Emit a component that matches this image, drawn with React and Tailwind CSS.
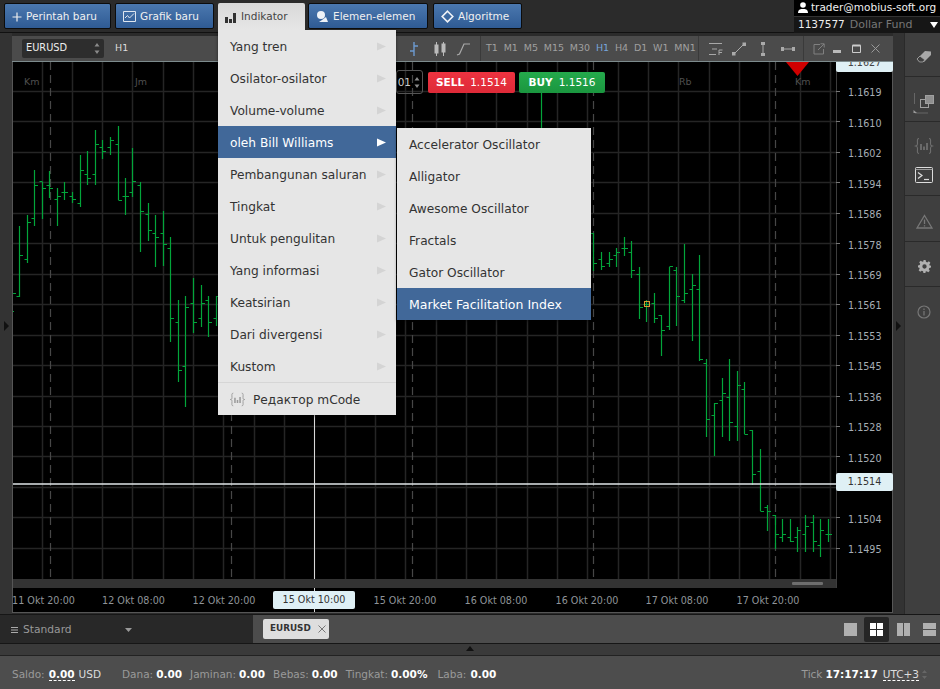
import React from 'react';

// crop-space readings of the bars: [x, high, low, open, close]
const leftBars = [
  [59, 378, 590, 590, 466], [81, 345, 490, 478, 367], [103, 210, 377, 356, 256], [127, 245, 357, 245, 265],
  [149, 212, 293, 256, 265], [172, 265, 377, 299, 288], [194, 245, 300, 277, 277], [217, 277, 310, 288, 299],
  [240, 165, 322, 310, 210], [263, 153, 255, 222, 234], [285, 90, 255, 222, 132], [308, 120, 176, 143, 155],
  [331, 110, 164, 143, 120], [354, 78, 300, 132, 300], [376, 235, 345, 288, 288], [398, 143, 290, 277, 245],
  [421, 245, 456, 256, 333], [444, 310, 422, 344, 390], [466, 345, 500, 400, 412], [489, 333, 498, 400, 432],
  [512, 412, 725, 444, 656], [535, 600, 845, 667, 812], [557, 588, 921, 800, 622], [580, 534, 700, 611, 667],
  [603, 556, 680, 656, 611], [625, 588, 712, 600, 667], [648, 588, 678, 656, 590],
].map(([x, h, l, o, c]) => [x / 3, 100 + h / 3, 100 + l / 3, 100 + o / 3, 100 + c / 3]);

const midBars = [
  [11, 400, 513, 400, 490], [34, 456, 510, 478, 500], [57, 456, 500, 490, 478], [79, 445, 500, 466, 456],
  [102, 412, 467, 445, 445], [125, 423, 535, 456, 512], [148, 500, 657, 523, 622], [170, 600, 667, 612, 612],
  [193, 580, 668, 611, 656], [215, 645, 768, 645, 690], [238, 500, 690, 680, 500], [260, 500, 678, 512, 590],
  [283, 432, 610, 600, 580], [306, 523, 722, 568, 557], [328, 466, 782, 568, 778],
].map(([x, h, l, o, c]) => [590 + x / 3, 100 + h / 3, 100 + l / 3, 100 + o / 3, 100 + c / 3]);

const rightBars = [
  [20, 28, 262, 40, 207], [44, 160, 318, 195, 160], [67, 85, 262, 150, 130], [89, 28, 272, 142, 218],
  [112, 62, 272, 230, 107], [134, 97, 253, 118, 253], [157, 240, 405, 240, 373], [180, 297, 484, 363, 484],
  [202, 465, 542, 473, 484], [225, 495, 597, 495, 552], [248, 507, 575, 563, 552], [270, 507, 575, 563, 575],
  [293, 530, 607, 563, 541], [316, 495, 607, 552, 530], [339, 495, 607, 518, 575], [361, 507, 620, 586, 541],
  [384, 507, 575, 552, 552],
].map(([x, h, l, o, c]) => [700 + x / 3, 350 + h / 3, 350 + l / 3, 350 + o / 3, 350 + c / 3]);

const bars = [...leftBars, ...midBars, ...rightBars, [541, 93, 130, 130, 130]];

const prices = ['1.1619', '1.1610', '1.1602', '1.1594', '1.1586', '1.1578', '1.1569', '1.1561', '1.1553', '1.1545', '1.1536', '1.1528', '1.1520', '', '1.1504', '1.1495'];
const times = [[43.5, '11 Okt 20:00'], [133.5, '12 Okt 08:00'], [224, '12 Okt 20:00'], [405, '15 Okt 20:00'], [496, '16 Okt 08:00'], [587, '16 Okt 20:00'], [677, '17 Okt 08:00'], [768, '17 Okt 20:00']];
const frames = ['T1', 'M1', 'M5', 'M15', 'M30', 'H1', 'H4', 'D1', 'W1', 'MN1'];
const menuItems = ['Yang tren', 'Osilator-osilator', 'Volume-volume', 'oleh Bill Williams', 'Pembangunan saluran', 'Tingkat', 'Untuk pengulitan', 'Yang informasi', 'Keatsirian', 'Dari divergensi', 'Kustom'];
const subItems = ['Accelerator Oscillator', 'Alligator', 'Awesome Oscillator', 'Fractals', 'Gator Oscillator', 'Market Facilitation Index'];

const px = (v) => Math.floor(v) + 0.5;

const Chart = () => (
  <svg viewBox="12 62 881 551" className="block h-[551px] w-[881px]">
    {Array.from({ length: 27 }, (_, i) => (
      <path key={i} d={`M${px(42 + i * 30.33)} 62V579`} stroke="#252525" strokeWidth="1.5" />
    ))}
    {prices.map((p, i) => (
      <path key={i} d={`M12 ${px(91.5 + i * 30.45)}H836`} stroke="#252525" strokeWidth="1.5" />
    ))}
    {[50, 231, 412, 593, 775].map((x) => (
      <path key={x} d={`M${x + 0.5} 62V579`} stroke="#474747" strokeDasharray="8 5" strokeWidth="1.2" />
    ))}
    <g stroke="#02a53a" fill="none" strokeWidth="1.2">
      {bars.map(([x, h, l, o, c], i) => (
        <path key={i} d={`M${px(x)} ${Math.round(h)}V${Math.round(l)}M${px(x) - 3} ${px(o)}H${px(x)}M${px(x)} ${px(c)}H${px(x) + 3.5}`} />
      ))}
      <path d="M13 293.5H16M13 311.5H14" />
    </g>
    <rect x="644.5" y="301.5" width="5" height="5" fill="none" stroke="#dc9a32" />
    <path d="M314.5 62V613" stroke="#d8d8d8" />
    <path d="M12 484H836" stroke="#e0e6e8" strokeWidth="1.6" />
    <rect x="12" y="579" width="824" height="9" fill="#333333" />
    <rect x="792" y="582" width="31" height="3" rx="1" fill="#6e6e6e" />
    <path d="M836.5 62V588" stroke="#3d3d3d" />
    <path d="M892.5 62V613M12 612.5H893M12.5 62V613" stroke="#565656" />
    {prices.map((p, i) => (
      <path key={i} d={`M836 ${px(91.5 + i * 30.45)}H840`} stroke="#777777" />
    ))}
    <path d="M786 62H809L797.5 76Z" fill="#d00000" />
    <g fontFamily="'DejaVu Sans', sans-serif" fontSize="9.5" fill="#4f4f4f">
      <text x="24" y="85">Km</text>
      <text x="135" y="85">Jm</text>
      <text x="679" y="85">Rb</text>
      <text x="795" y="85">Km</text>
    </g>
    <g fontFamily="'DejaVu Sans', sans-serif" fontSize="9.6" fill="#a6adb5">
      {prices.map((p, i) => (
        p && <text key={p} x="848" y={96.3 + i * 30.45}>{p}</text>
      ))}
      {times.map(([x, t]) => (
        <text key={t} x={x} y="604" textAnchor="middle" fill="#8f9499">{t}</text>
      ))}
    </g>
  </svg>
);

const TopButton = ({ icon, children, w }) => (
  <button className={`flex h-[26px] items-center gap-[4px] rounded-[2px] border border-[#0c0c0c] bg-gradient-to-b from-[#4b78af] to-[#2f5b94] pl-[7px] pt-px text-[10.5px] text-[#f0f0f0] ${w}`}>
    {icon}
    {children}
  </button>
);

const Divider = () => <div className="h-[25px] w-px bg-[#3a3a3a]" />;

const SideSlot = ({ h, children }) => (
  <div className={`flex flex-col items-center justify-center border-b border-[#2a2a2a] pl-[3px] ${h}`}>{children}</div>
);

const Braces = ({ color, size = 20 }) => (
  <svg width={size} height={size} viewBox="0 0 20 20" fill="none" stroke={color} strokeWidth="1.1">
    <path d="M5 2.5C2.8 2.5 3.5 5 3.5 7.5S3 9.5 1.5 10C3 10.5 3.5 10 3.5 12.5S2.8 17.5 5 17.5M15 2.5C17.2 2.5 16.5 5 16.5 7.5S17 9.5 18.5 10C17 10.5 16.5 10 16.5 12.5S17.2 17.5 15 17.5" />
    <path d="M7 8V14M10 10.5V14M13 7V14" strokeWidth="1.8" />
  </svg>
);

const Tri = ({ color }) => (
  <svg width="9" height="9" viewBox="0 0 9 9"><path d="M0 0.5L9 4.5L0 8.5Z" fill={color} /></svg>
);

const Updown = () => (
  <svg width="6" height="13" viewBox="0 0 6 13" fill="#8a8a8a"><path d="M3 1L5.5 4.5H0.5ZM3 12L0.5 8.5H5.5Z" /></svg>
);

const Menu = () => (
  <div className="absolute left-[218px] top-[30px] z-20 w-[178px] bg-[#e6e6e6] text-[12.2px] text-[#333] shadow-[0_1px_3px_rgba(0,0,0,0.5)]">
    {menuItems.map((m, i) => (
      <div key={m} className={`flex h-[32px] items-center justify-between pl-[12px] pr-[10px] ${i === 3 ? 'bg-[#416899] text-white' : ''}`}>
        <span className="pt-[2px]">{m}</span>
        <Tri color={i === 3 ? '#ffffff' : '#d4d4d4'} />
      </div>
    ))}
    <div className="flex h-[33px] items-center gap-[7px] border-t border-[#d6d6d6] pl-[11px]">
      <Braces color="#9a9a9a" size={17} />
      <span className="pt-[2px]">Редактор mCode</span>
    </div>
  </div>
);

const SubMenu = () => (
  <div className="absolute left-[397px] top-[128px] z-20 w-[194px] bg-[#e6e6e6] text-[12.2px] text-[#333] shadow-[0_1px_3px_rgba(0,0,0,0.5)]">
    {subItems.map((m, i) => (
      <div key={m} className={`flex h-[32px] items-center pl-[12px] pt-[2px] ${i === 5 ? 'bg-[#416899] text-[12.5px] text-white' : ''}`}>{m}</div>
    ))}
  </div>
);

const LayoutIcons = () => (
  <div className="ml-auto flex items-center gap-[13.5px] pr-[4px]">
    <div className="h-[13px] w-[13px] bg-[#b0b0b0]" />
    <div className="-mx-[6px] flex h-[25px] w-[25px] items-center justify-center rounded-[2px] bg-[#262626]">
      <div className="grid h-[13px] w-[13px] grid-cols-2 gap-px">
        <div className="bg-white" /><div className="bg-white" /><div className="bg-white" /><div className="bg-white" />
      </div>
    </div>
    <div className="grid h-[13px] w-[13px] grid-cols-2 gap-px">
      <div className="bg-[#b0b0b0]" /><div className="bg-[#b0b0b0]" />
    </div>
    <div className="grid h-[13px] w-[13px] grid-rows-2 gap-px">
      <div className="bg-[#b0b0b0]" /><div className="bg-[#b0b0b0]" />
    </div>
  </div>
);

export default function App() {
  return (
    <div className="relative flex h-[689px] w-[940px] flex-col overflow-hidden bg-[#2b2b2b] font-['DejaVu_Sans',sans-serif]">
      {/* top bar */}
      <div className="flex h-[33px] shrink-0 border-b border-[#111] bg-[#2b2b2b]">
        <div className="flex items-start gap-[4px] pl-[4px] pt-[3px]">
          <TopButton w="w-[107px]" icon={<svg width="10" height="10" viewBox="0 0 10 10" stroke="#eee" strokeWidth="1.2"><path d="M5 0.5V9.5M0.5 5H9.5" /></svg>}>Perintah baru</TopButton>
          <TopButton w="w-[99px]" icon={<svg width="13" height="13" viewBox="0 0 13 13" fill="none" stroke="#dfe6ef"><path d="M0.5 1.5H12.5V11.5H0.5Z" /><path d="M2 8L4.5 5.5L6.5 8L11 3.5" /></svg>}>Grafik baru</TopButton>
          <button className="relative z-30 flex h-[27px] w-[87px] items-center gap-[5px] rounded-t-[2px] bg-gradient-to-b from-[#d9d9d9] to-[#e6e6e6] pl-[7px] pt-px text-[10.5px] text-[#444]">
            <svg width="11" height="11" viewBox="0 0 11 11" fill="#333"><path d="M0 5H3V11H0ZM4 7H7V11H4ZM8 1H11V11H8Z" /></svg>
            Indikator
          </button>
          <TopButton w="w-[120px] -ml-[1px]" icon={<svg width="13" height="13" viewBox="0 0 13 13" fill="#eef2f7"><circle cx="5" cy="5" r="4" /><path d="M3 12L12 12L10 7L6 10Z" /></svg>}>Elemen-elemen</TopButton>
          <TopButton w="w-[89px] ml-[1px]" icon={<svg width="13" height="13" viewBox="0 0 13 13" fill="none" stroke="#f0f3f7" strokeWidth="1.6"><path d="M6.5 1.2L11.8 6.5L6.5 11.8L1.2 6.5Z" /></svg>}>Algoritme</TopButton>
        </div>
        <div className="ml-auto flex h-[32px] w-[146px] flex-col bg-black text-[10.5px]">
          <div className="flex h-[17px] items-center gap-[3px] whitespace-nowrap pl-[4px] text-[#f0f0f0]">
            <svg width="10" height="11" viewBox="0 0 10 11" fill="#fff"><circle cx="5" cy="3" r="2.8" /><path d="M0 11C0 7 3 7 5 7S10 7 10 11Z" /></svg>
            trader@mobius-soft.org
          </div>
          <div className="flex flex-1 items-center border-t border-[#333] bg-[#161616] pl-[4px]">
            <span className="text-[#eee]">1137577</span>
            <span className="ml-[5px] text-[11px] text-[#777]">Dollar Fund</span>
            <svg className="ml-auto mr-[2px]" width="8" height="6" viewBox="0 0 8 6" fill="#fff"><path d="M0 0H8L4 6Z" /></svg>
          </div>
        </div>
      </div>

      {/* main row */}
      <div className="flex h-[581px] shrink-0">
        <div className="flex w-[12px] items-center justify-center bg-[#333] pt-[5px]">
          <svg width="5" height="10" viewBox="0 0 5 10" fill="#111"><path d="M0 0L5 5L0 10Z" /></svg>
        </div>
        <div className="flex w-[881px] flex-col pt-[3px]">
          <div className="flex h-[26px] items-center border-b border-[#7d8b8d] bg-[#4b4b4b]">
            <div className="ml-[10px] flex h-[19px] w-[82px] items-center justify-between rounded-[2px] bg-[#2d2d2d] px-[4px] text-[9.8px] text-[#eee]">
              EURUSD
              <Updown />
            </div>
            <span className="ml-[11px] w-[13px] text-[9.5px] text-[#ddd]">H1</span>
            <div className="ml-[286px] flex w-[66px] items-center">
              <svg className="ml-[-6px]" width="12" height="18" viewBox="0 0 12 18" fill="none" stroke="#6d9bd0" strokeWidth="1.4"><path d="M6 2V16M2 11H6M6 6H10" /></svg>
              <svg className="ml-[13px]" width="14" height="16" viewBox="0 0 14 16" fill="#bbb" stroke="#bbb"><path d="M3.5 1V15M10.5 1V15" /><rect x="2" y="4" width="3" height="8" /><rect x="9" y="3" width="3" height="8" /></svg>
              <svg className="ml-[9px]" width="15" height="15" viewBox="0 0 15 15" fill="none" stroke="#aaa" strokeWidth="1.2"><path d="M1 14L3.5 13L8 3H14" /></svg>
            </div>
            <Divider />
            <div className="flex w-[217px] items-center gap-[5.8px] pl-[5px] text-[9.5px] text-[#a0a0a0]">
              {frames.map((f) => (
                <span key={f} className={f === 'H1' ? 'text-[#78a6dc]' : ''}>{f}</span>
              ))}
            </div>
            <Divider />
            <div className="flex w-[104px] items-center pl-[8px]">
              <svg width="16" height="14" viewBox="0 0 16 14" fill="none" stroke="#a8a8a8"><path d="M2 1.5H15M5 7H10M2 12.5H9" /><path d="M12 13V8H15.5M12 10.5H15" /></svg>
              <svg className="ml-[9px]" width="14" height="14" viewBox="0 0 14 14" fill="#aaa" stroke="#aaa"><path d="M2 12L12 2" /><rect x="0.5" y="10.5" width="2.5" height="2.5" /><rect x="11" y="1" width="2.5" height="2.5" /></svg>
              <svg className="ml-[14px]" width="6" height="14" viewBox="0 0 6 14" fill="#aaa" stroke="#aaa"><path d="M3 2V12" /><rect x="1.5" y="0.5" width="3" height="2" /><rect x="1.5" y="11.5" width="3" height="2" /></svg>
              <svg className="ml-[15px]" width="14" height="6" viewBox="0 0 14 6" fill="#aaa" stroke="#aaa"><path d="M2 3H12" /><rect x="0.5" y="1.5" width="2" height="3" /><rect x="11.5" y="1.5" width="2" height="3" /></svg>
            </div>
            <Divider />
            <div className="flex flex-1 items-center pl-[9px]">
              <svg width="12" height="12" viewBox="0 0 12 12" fill="none" stroke="#808080"><path d="M7 1.5H1V11H10.5V6M5 7L11 1M7.5 0.8H11.2V4.5" /></svg>
              <svg className="ml-[8px] mt-[5px]" width="8" height="3" viewBox="0 0 8 3" fill="#bbb"><path d="M0 0H8V3H0Z" /></svg>
              <svg className="ml-[11px]" width="9" height="9" viewBox="0 0 9 9" fill="none" stroke="#ccc"><path d="M0.5 1.5H8.5V8.5H0.5Z" /><path d="M0.5 1.5H8.5" strokeWidth="2" /></svg>
              <svg className="ml-[10px]" width="9" height="9" viewBox="0 0 9 9" stroke="#999"><path d="M0.5 0.5L8.5 8.5M8.5 0.5L0.5 8.5" /></svg>
            </div>
          </div>

          <div className="relative h-[551px] overflow-hidden bg-black">
            <Chart />
            <div className="absolute left-[824px] top-0 flex h-[10px] w-[57px] items-start justify-center overflow-hidden rounded-b-[2px] bg-[#dff0f5] text-[9.6px] leading-[10px] text-[#444]">
              <span className="-mt-[4px]">1.1627</span>
            </div>
            <div className="absolute left-[824px] top-[411px] flex h-[18px] w-[57px] items-center justify-center rounded-[2px] bg-[#dff0f5] text-[9.6px] text-[#333]">1.1514</div>
            <div className="absolute left-[261px] top-[529px] flex h-[18px] w-[82px] items-center justify-center rounded-[2px] bg-[#dff0f5] text-[9.6px] text-[#333]">15 Okt 10:00</div>
            <div className="absolute left-[384px] top-[8px] flex h-[24px] w-[27px] items-center justify-end gap-[3px] rounded-[3px] border border-[#555] pr-[2px] pt-px text-[10.5px] text-[#ccc]">
              01
              <Updown />
            </div>
            <div className="absolute left-[416px] top-[10px] flex h-[21px] w-[87px] items-center justify-center gap-[6px] rounded-[2px] bg-gradient-to-b from-[#ee3340] to-[#dd2a38] pt-px text-[10.5px] text-white">
              <b>SELL</b> 1.1514
            </div>
            <div className="absolute left-[507px] top-[10px] flex h-[21px] w-[86px] items-center justify-center gap-[6px] rounded-[2px] bg-gradient-to-b from-[#25aa4c] to-[#1a963f] pt-px text-[10.5px] text-white">
              <b>BUY</b> 1.1516
            </div>
          </div>
        </div>
        <div className="flex w-[11px] items-center justify-center bg-[#333] pt-[5px]">
          <svg width="5" height="10" viewBox="0 0 5 10" fill="#111"><path d="M0 0L5 5L0 10Z" /></svg>
        </div>
        <div className="flex w-[36px] flex-col border-l border-[#2a2a2a] bg-[#3f3f3f] pt-[3px]">
          <SideSlot h="h-[41px] pt-[2px]">
            <svg width="16" height="14" viewBox="0 0 16 14" fill="#a8a8a8"><path d="M9 1L15 1.5L15 5L8 12H3.5L1 9Z" /><path d="M1 9L4 6L9 10L6.5 12H3.5Z" fill="#3f3f3f" stroke="#a8a8a8" strokeWidth="0.8" /></svg>
          </SideSlot>
          <SideSlot h="h-[45px] pt-[8px]">
            <svg width="22" height="24" viewBox="0 0 22 24" fill="none" stroke="#a0a0a0"><path d="M1.5 2V13M2 22H15" stroke="#666" /><path d="M0.5 19L4 22H0.5Z" fill="#999" stroke="none" /><rect x="7.5" y="8.5" width="8" height="8" /><rect x="12.5" y="4.5" width="8" height="8" fill="#8f8f8f" /></svg>
          </SideSlot>
          <SideSlot h="h-[74px] pt-[2px] gap-[11px]">
            <Braces color="#6f6f6f" />
            <svg width="18" height="16" viewBox="0 0 18 16" fill="none" stroke="#ddd"><rect x="0.5" y="0.5" width="17" height="15" rx="1" /><path d="M0.5 2.5H17.5" stroke="#999" /><path d="M3 5.5L7 8.5L3 11.5" strokeWidth="1.2" /><path d="M9 12.5H14" strokeWidth="1.2" /></svg>
          </SideSlot>
          <SideSlot h="h-[46px] pt-[6px]">
            <svg width="17" height="15" viewBox="0 0 17 15" fill="none" stroke="#777" strokeWidth="1.3"><path d="M8.5 1.5L16 14H1Z" /><path d="M8.5 5.5V10M8.5 11.2V12.5" /></svg>
          </SideSlot>
          <SideSlot h="h-[45px] pt-[5px]">
            <svg width="13" height="13" viewBox="0 0 24 24" fill="#b0b0b0"><path fillRule="evenodd" d="M10 0h4l.7 3.4 2.4 1 2.9-1.9 2.8 2.8-1.9 2.9 1 2.4L24 10v4l-3.1.7-1 2.4 1.9 2.9-2.8 2.8-2.9-1.9-2.4 1L14 24h-4l-.7-3.1-2.4-1-2.9 1.9-2.8-2.8 1.9-2.9-1-2.4L0 14v-4l3.1-.7 1-2.4-1.9-2.9 2.8-2.8 2.9 1.9 2.4-1zM12 8a4 4 0 100 8 4 4 0 000-8z" /></svg>
          </SideSlot>
          <div className="flex h-[50px] items-center justify-center pl-[3px]">
            <svg width="14" height="14" viewBox="0 0 14 14" fill="none" stroke="#777" strokeWidth="1.2"><circle cx="7" cy="7" r="6" /><path d="M7 6V10.5M7 3.5V5" /></svg>
          </div>
        </div>
      </div>

      {/* tab bar */}
      <div className="flex h-[30px] shrink-0 border-y border-[#161616] bg-[#4c4c4c]">
        <div className="flex w-[253px] items-center bg-[#282828] pl-[11px] pt-[2px] text-[10.7px] text-[#999]">
          <svg width="7" height="8" viewBox="0 0 7 8" stroke="#aaa"><path d="M0 1.5H7M0 4H7M0 6.5H7" /></svg>
          <span className="ml-[5px]">Standard</span>
          <svg className="ml-[53px]" width="7" height="4" viewBox="0 0 7 4" fill="#999"><path d="M0 0H7L3.5 4Z" /></svg>
        </div>
        <div className="ml-[10px] mt-[4px] flex h-[20px] w-[66px] items-center gap-[7px] rounded-[2px] bg-[#dedede] pl-[7px] text-[8.8px] font-bold text-[#333]">
          EURUSD
          <svg width="8" height="8" viewBox="0 0 8 8" stroke="#777"><path d="M0.5 0.5L7.5 7.5M7.5 0.5L0.5 7.5" /></svg>
        </div>
        <LayoutIcons />
      </div>

      {/* splitter */}
      <div className="flex h-[11px] shrink-0 justify-center bg-[#3a3a3a] pt-[2px]">
        <svg width="8" height="5" viewBox="0 0 8 5" fill="#111"><path d="M4 0L8 5H0Z" /></svg>
      </div>

      {/* status bar */}
      <div className="flex flex-1 items-center border-t border-[#222] bg-[#4d4d4d] pl-[12px] pr-[13px] pt-[4px] text-[10.5px] text-[#9a9a9a]">
        <span>Saldo:</span>
        <b className="ml-[4px] border-b border-dashed border-white leading-[12px] text-white">0.00</b>
        <span className="ml-[4px] text-[#ddd]">USD</span>
        <span className="ml-[21px]">Dana:</span>
        <b className="ml-[3px] text-white">0.00</b>
        <span className="ml-[8px]">Jaminan:</span>
        <b className="ml-[3px] text-white">0.00</b>
        <span className="ml-[8px]">Bebas:</span>
        <b className="ml-[3px] text-white">0.00</b>
        <span className="ml-[8px]">Tingkat:</span>
        <b className="ml-[3px] text-white">0.00%</b>
        <span className="ml-[10px]">Laba:</span>
        <b className="ml-[4px] text-white">0.00</b>
        <span className="ml-auto">Tick</span>
        <b className="ml-[3px] text-white">17:17:17</b>
        <span className="ml-[5px] border-b border-dashed border-white leading-[12px] text-[#ddd]">UTC+3</span>
        <svg className="ml-[3px]" width="5" height="11" viewBox="0 0 5 11" fill="#666"><path d="M2.5 1L5 4H0ZM2.5 10L0 7H5Z" /></svg>
      </div>

      <Menu />
      <SubMenu />
    </div>
  );
}
